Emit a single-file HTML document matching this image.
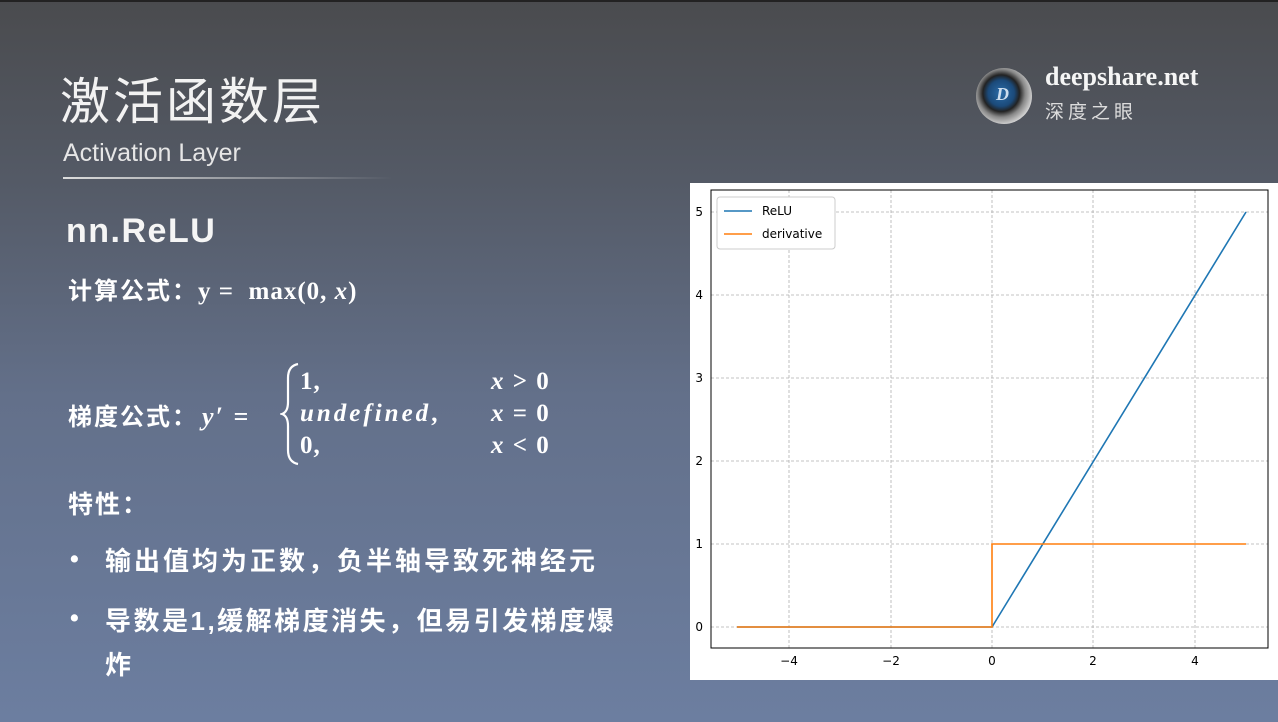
<!DOCTYPE html>
<html><head><meta charset="utf-8"><style>
body{margin:0;width:1278px;height:722px;overflow:hidden;background:linear-gradient(180deg,#4a4b4e 0%,#545a66 25%,#63708a 55%,#6c7ea0 100%);font-family:"Liberation Sans","Noto Sans CJK SC",sans-serif;color:#fff;position:relative}
.a{position:absolute;white-space:nowrap}
.cj{font-family:"Liberation Sans","Noto Sans CJK SC",sans-serif}
.m{font-family:"Liberation Serif","DejaVu Serif",serif;font-weight:bold}
.i{font-style:italic}
</style></head><body>
<div class="a" style="left:0;top:0;width:1278px;height:2px;background:#222"></div>
<div class="a cj" style="left:60px;top:62px;font-size:50px;color:#f2f2f2;letter-spacing:3px">激活函数层</div>
<div class="a" style="left:63px;top:139px;font-size:25px;color:#e6e6e6">Activation Layer</div>
<div class="a" style="left:63px;top:177px;width:330px;height:2px;background:linear-gradient(90deg,#ddd,rgba(220,220,220,0))"></div>
<div class="a" style="left:976px;top:68px;width:56px;height:56px;border-radius:50%;background:radial-gradient(circle at 45% 45%,#2b6ca8 0,#1b4a7a 30%,#222 42%,#888 55%,#ddd 75%,#555 100%)"></div>
<div class="a m" style="left:996px;top:84px;font-size:18px;color:#cde;font-style:italic">D</div>
<div class="a m" style="left:1045px;top:62px;font-size:26px;color:#f5f5f5">deepshare.net</div>
<div class="a cj" style="left:1045px;top:97px;font-size:19px;color:#ddd;letter-spacing:4px">深度之眼</div>
<div class="a" style="left:66px;top:212px;font-size:34px;color:#f5f5f5;font-weight:bold;letter-spacing:1.5px">nn.ReLU</div>
<div class="a cj" style="left:68px;top:271px;font-size:24px;font-weight:bold;letter-spacing:2px">计算公式：<span class="m" style="font-size:25px;letter-spacing:1px">y = &nbsp;</span><span style="font-family:'Liberation Serif',serif;font-size:25px;letter-spacing:1px">max(<b>0</b>, <b class="i">x</b>)</span></div>
<div class="a cj" style="left:68px;top:397px;font-size:24px;font-weight:bold;letter-spacing:2px">梯度公式：<span class="m i" style="font-size:26px;letter-spacing:2px;margin-left:4px">y′ =</span></div>
<svg class="a" style="left:280px;top:362px" width="24" height="104" viewBox="0 0 24 104"><path d="M18 2 Q8 4 8 16 L8 40 Q8 50 2 52 Q8 54 8 64 L8 88 Q8 100 18 102" fill="none" stroke="#fff" stroke-width="2.2"/></svg>
<div class="a m" style="left:300px;top:366px;font-size:25px;line-height:32px;letter-spacing:1px">1,<br><span class="i" style="letter-spacing:3px">undefined</span>,<br>0,</div>
<div class="a m" style="left:491px;top:366px;font-size:25px;line-height:32px;letter-spacing:1.5px"><span class="i">x</span> &gt; 0<br><span class="i">x</span> = 0<br><span class="i">x</span> &lt; 0</div>
<div class="a cj" style="left:68px;top:485px;font-size:25px;font-weight:bold;letter-spacing:2px">特性：</div>
<div class="a cj" style="left:70px;top:545px;font-size:25px;font-weight:bold">•</div>
<div class="a cj" style="left:105px;top:541px;font-size:26px;font-weight:bold;letter-spacing:3px">输出值均为正数，负半轴导致死神经元</div>
<div class="a cj" style="left:70px;top:604px;font-size:25px;font-weight:bold">•</div>
<div class="a cj" style="left:105px;top:599px;font-size:26px;font-weight:bold;line-height:44px;letter-spacing:2.5px">导数是1,缓解梯度消失，但易引发梯度爆<br>炸</div>
<div class="a" style="left:752px;top:376px;width:14px;height:14px;border-radius:50%;background:radial-gradient(circle,#fff 25%,#e33 35%,#e33 50%,rgba(255,80,80,.4) 60%,rgba(255,80,80,0) 100%)"></div>
<svg class="a" style="left:690px;top:183px" width="588" height="497" viewBox="690 183 588 497">
<rect x="690" y="183" width="588" height="497" fill="#fff"/>
<g stroke="#b0b0b0" stroke-dasharray="3,2" stroke-width="0.8">
<line x1="789" y1="190" x2="789" y2="648"/><line x1="891" y1="190" x2="891" y2="648"/><line x1="992" y1="190" x2="992" y2="648"/><line x1="1093" y1="190" x2="1093" y2="648"/><line x1="1195" y1="190" x2="1195" y2="648"/>
<line x1="711" y1="627" x2="1268" y2="627"/><line x1="711" y1="544" x2="1268" y2="544"/><line x1="711" y1="461" x2="1268" y2="461"/><line x1="711" y1="378" x2="1268" y2="378"/><line x1="711" y1="295" x2="1268" y2="295"/><line x1="711" y1="212" x2="1268" y2="212"/>
</g>
<rect x="711" y="190" width="557" height="458" fill="none" stroke="#000" stroke-width="1"/>
<polyline points="737,627 992,627 1246,212" fill="none" stroke="#1f77b4" stroke-width="1.6"/>
<polyline points="737,627 992,627 992,544 1246,544" fill="none" stroke="#ff7f0e" stroke-width="1.6"/>
<g font-family="DejaVu Sans,sans-serif" font-size="12" fill="#000">
<text x="789" y="665" text-anchor="middle">−4</text><text x="891" y="665" text-anchor="middle">−2</text><text x="992" y="665" text-anchor="middle">0</text><text x="1093" y="665" text-anchor="middle">2</text><text x="1195" y="665" text-anchor="middle">4</text>
<text x="703" y="631" text-anchor="end">0</text><text x="703" y="548" text-anchor="end">1</text><text x="703" y="465" text-anchor="end">2</text><text x="703" y="382" text-anchor="end">3</text><text x="703" y="299" text-anchor="end">4</text><text x="703" y="216" text-anchor="end">5</text>
</g>
<rect x="717" y="197" width="118" height="52" rx="3" fill="#fff" stroke="#ccc"/>
<line x1="724" y1="211" x2="752" y2="211" stroke="#1f77b4" stroke-width="1.6"/>
<line x1="724" y1="234" x2="752" y2="234" stroke="#ff7f0e" stroke-width="1.6"/>
<g font-family="DejaVu Sans,sans-serif" font-size="12" fill="#000"><text x="762" y="215">ReLU</text><text x="762" y="238">derivative</text></g>
</svg>
</body></html>
